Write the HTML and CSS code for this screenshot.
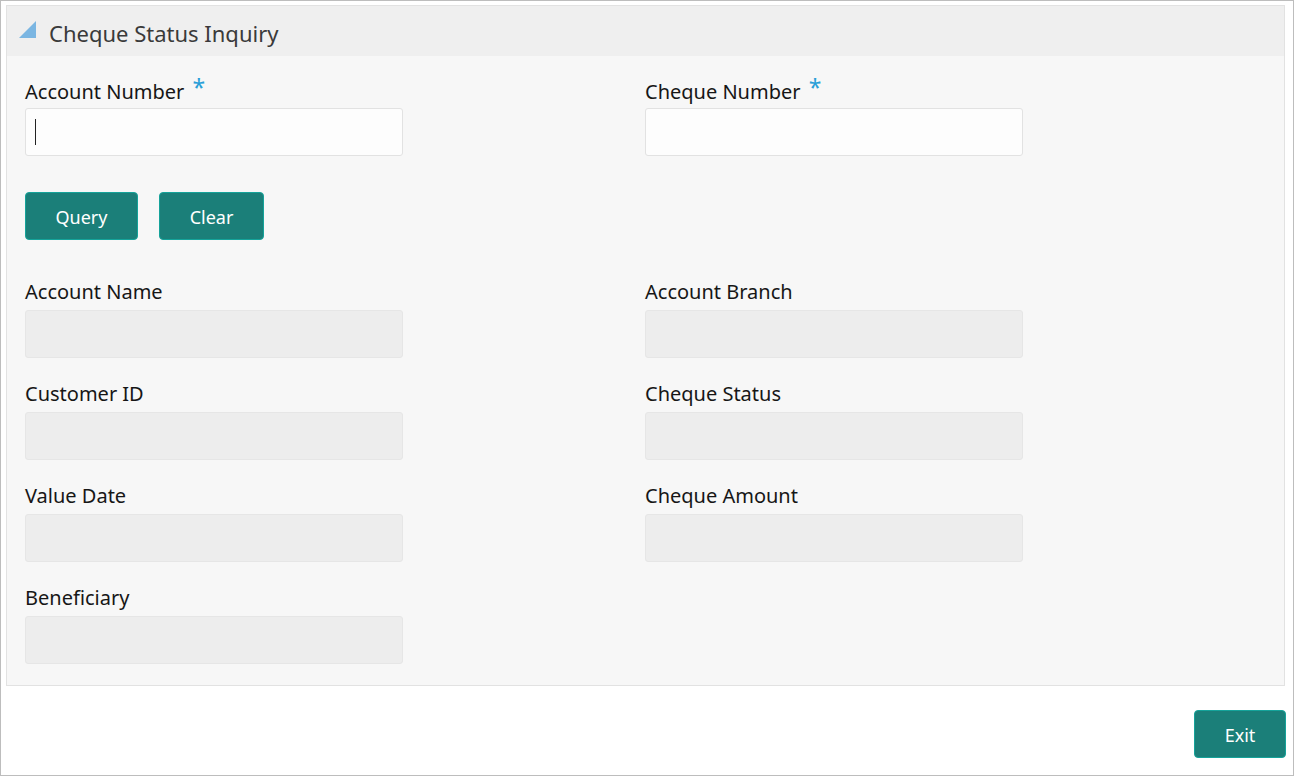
FILE: index.html
```html
<!DOCTYPE html>
<html>
<head>
<meta charset="utf-8">
<link rel="stylesheet" href="styles.css">
</head>
<body>
<div class="frame">
  <div class="panel">
    <div class="panel-head">
      <span class="tri"></span>
      <span class="title">Cheque Status Inquiry</span>
    </div>
    <div class="panel-body">
      <div class="grid">
        <div class="field">
          <label class="lbl">Account Number <span class="req">*</span></label>
          <div class="input edit"><span class="caret"></span></div>
        </div>
        <div class="field">
          <label class="lbl">Cheque Number <span class="req">*</span></label>
          <div class="input edit"></div>
        </div>
      </div>
      <div class="actions">
        <button class="btn btn-query">Query</button>
        <button class="btn btn-clear">Clear</button>
      </div>
      <div class="grid results">
        <div class="field">
          <label class="lbl">Account Name</label>
          <div class="input ro"></div>
        </div>
        <div class="field">
          <label class="lbl">Account Branch</label>
          <div class="input ro"></div>
        </div>
        <div class="field">
          <label class="lbl">Customer ID</label>
          <div class="input ro"></div>
        </div>
        <div class="field">
          <label class="lbl">Cheque Status</label>
          <div class="input ro"></div>
        </div>
        <div class="field">
          <label class="lbl">Value Date</label>
          <div class="input ro"></div>
        </div>
        <div class="field">
          <label class="lbl">Cheque Amount</label>
          <div class="input ro"></div>
        </div>
        <div class="field">
          <label class="lbl">Beneficiary</label>
          <div class="input ro"></div>
        </div>
      </div>
    </div>
  </div>
  <div class="footer">
    <button class="btn btn-exit">Exit</button>
  </div>
</div>
</body>
</html>
```
FILE: styles.css
```css
* { box-sizing: border-box; }
html, body { margin: 0; padding: 0; background: #ffffff; }
body { font-family: "Noto Sans", "Open Sans", sans-serif; color: #161616; }
.frame {
  width: 1294px;
  height: 776px;
  border: 1px solid #bdbdbd;
  padding: 4px 8px 0 5px;
}
.panel {
  border: 1px solid #e2e2e2;
  background: #f7f7f7;
}
.panel-head {
  height: 50px;
  background: #efefef;
  display: flex;
  align-items: center;
  padding-left: 12px;
  padding-top: 3px;
  gap: 13px;
}
.tri {
  width: 0;
  height: 0;
  border-left: 17px solid transparent;
  border-bottom: 17px solid #7bb6e2;
  margin-top: -6px;
}
.title {
  font-size: 22px;
  color: #3a3a3a;
}
.panel-body {
  padding: 22px 18px 21px 18px;
}
.grid {
  display: grid;
  grid-template-columns: 620px 378px;
  row-gap: 24px;
}
.field { display: flex; flex-direction: column; }
.lbl {
  font-size: 20px;
  line-height: 24px;
  height: 30px;
  color: #161616;
}
.req {
  color: #2a9fd8;
  font-size: 23px;
  margin-left: 3px;
  position: relative;
  top: -3px;
}
.input {
  width: 378px;
  height: 48px;
  border-radius: 3px;
  position: relative;
}
.edit { background: #fdfdfd; border: 1px solid #e2e2e2; }
.ro { background: #ededed; border: 1px solid #e6e6e6; }
.caret {
  position: absolute;
  left: 9px;
  top: 10px;
  width: 1px;
  height: 26px;
  background: #222;
}
.actions {
  display: flex;
  gap: 21px;
  margin-top: 36px;
}
.results { margin-top: 40px; }
.btn {
  height: 48px;
  background: #1b7f79;
  border: 1px solid #15a39a;
  border-radius: 4px;
  color: #ffffff;
  font-family: "Noto Sans", "Open Sans", sans-serif;
  font-size: 18px;
  padding: 2px 0 0 0;
}
.btn-query { width: 113px; }
.btn-clear { width: 105px; }
.footer {
  display: flex;
  justify-content: flex-end;
  margin-top: 24px;
}
.btn-exit { width: 92px; margin-right: -1px; }
```
